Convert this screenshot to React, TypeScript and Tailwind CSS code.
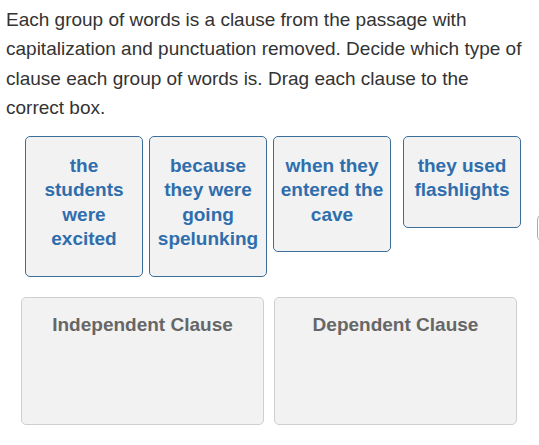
export default function App() {
  const tiles = [
    { id: 1, words: "the students were excited", h: "h-[141px]", extra: "" },
    { id: 2, words: "because they were going spelunking", h: "h-[141px]", extra: "" },
    { id: 3, words: "when they entered the cave", h: "h-[116px]", extra: "" },
    { id: 4, words: "they used flashlights", h: "h-[92px]", extra: "ml-[6px]" },
  ];

  return (
    <div className="relative w-[539px] h-[445px] overflow-hidden bg-white font-['Liberation_Sans',Arial,sans-serif]">
      <p className="pl-[6px] pt-[5px] text-[19px] leading-[29.4px] text-[#333] whitespace-nowrap">
        Each group of words is a clause from the passage with
        <br />
        capitalization and punctuation removed. Decide which type of
        <br />
        clause each group of words is. Drag each clause to the
        <br />
        correct box.
      </p>

      <div className="mt-[13px] ml-[25px] flex items-start gap-[6px]">
        {tiles.map((t) => (
          <div
            key={t.id}
            className={`w-[118px] ${t.h} ${t.extra} shrink-0 rounded-[5px] border border-[#3d6e99] bg-[#f2f2f3] px-1 pt-[17px] text-center text-[19px] font-bold leading-[24.5px] text-[#2f6eac]`}
          >
            {t.words}
          </div>
        ))}
      </div>

      <div className="absolute left-[537px] top-[214px] h-[28px] w-[10px] rounded-l-[6px] border-l border-[#aaa]" />

      <div className="mt-[20px] ml-[21px] flex gap-[10px]">
        {["Independent Clause", "Dependent Clause"].map((label) => (
          <div
            key={label}
            className="h-[128px] w-[243px] rounded-[5px] border border-[#cfcfcf] bg-[#f2f2f2] pt-[15px] text-center text-[19px] font-bold leading-[24px] text-[#666]"
          >
            {label}
          </div>
        ))}
      </div>
    </div>
  );
}
